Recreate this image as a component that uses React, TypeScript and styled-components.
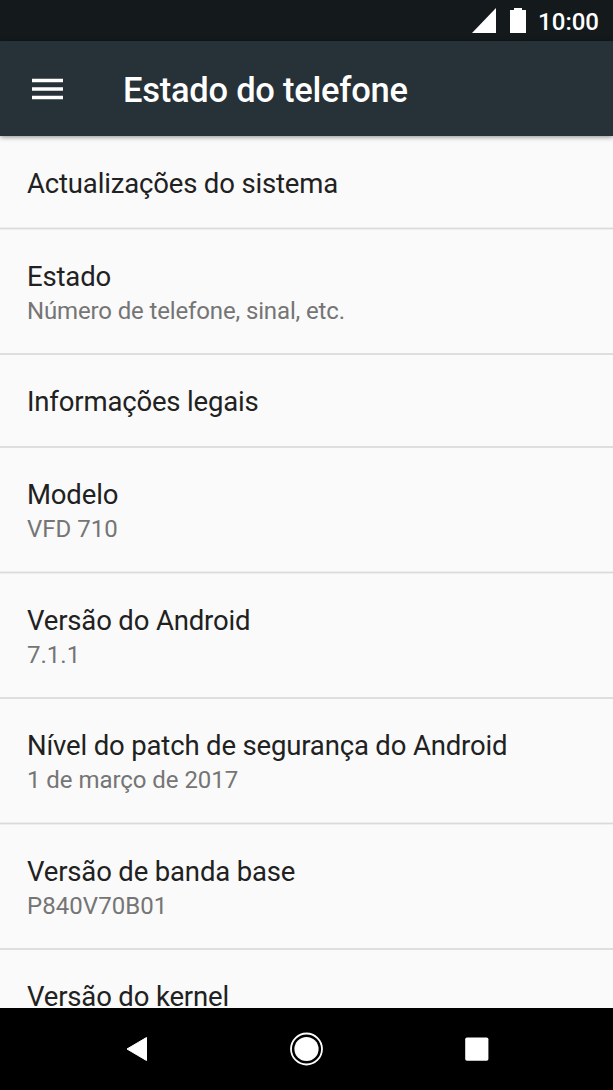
import React from "react";
import styled, { createGlobalStyle } from "styled-components";

const GlobalStyle = createGlobalStyle`
  * { box-sizing: border-box; }
  body { margin: 0; background: #fafafa; font-family: Roboto, sans-serif; }
`;

const Screen = styled.div`
  width: 613px;
  height: 1090px;
  display: flex;
  flex-direction: column;
  overflow: hidden;
  background: #fafafa;
`;

const StatusBar = styled.div`
  height: 41px;
  flex: none;
  display: flex;
  align-items: center;
  justify-content: flex-end;
  background: #14191c;
  color: #fff;
  padding-right: 14px;
`;

const Clock = styled.span`
  font-size: 24px;
  font-weight: 500;
  line-height: 28px;
  margin-left: 12px;
  padding-top: 2px;
`;

const AppBar = styled.header`
  height: 95px;
  flex: none;
  display: flex;
  align-items: center;
  padding: 0 0 0 32px;
  background: #263238;
  box-shadow: 0 1px 5px rgba(0, 0, 0, 0.45);
  z-index: 1;
`;

const Title = styled.h1`
  margin: 0 0 0 60px;
  padding-top: 2px;
  color: #fff;
  font-size: 34.5px;
  letter-spacing: -0.25px;
  font-weight: 500;
  line-height: 40px;
  white-space: nowrap;
`;

const List = styled.main`
  flex: 1;
  min-height: 0;
  overflow: hidden;
`;

const Item = styled.section<{ $height: number; $top: number; $soft?: boolean }>`
  height: ${(p) => p.$height}px;
  padding: ${(p) => p.$top}px 27px 0;
  border-bottom: ${(p) => (p.$soft ? "1px solid #dadada" : "2px solid #dedede")};
  box-shadow: ${(p) => (p.$soft ? "0 1px 0 #eeeeee, inset 0 -1px 0 #eeeeee" : "none")};
`;

const Label = styled.div`
  font-size: 27.5px;
  letter-spacing: -0.16px;
  line-height: 36px;
  color: #212121;
  white-space: nowrap;
`;

const Detail = styled.div<{ $tracking?: number }>`
  font-size: 24px;
  letter-spacing: ${(p) => p.$tracking ?? 0}px;
  line-height: 32px;
  color: #757575;
  white-space: nowrap;
`;

const NavBar = styled.nav`
  height: 82px;
  flex: none;
  display: grid;
  grid-template-columns: repeat(3, 170px);
  justify-content: center;
  align-items: center;
  justify-items: center;
  background: #000;
`;

const items = [
  { label: "Actualizações do sistema", height: 93, top: 30, soft: true },
  { label: "Estado", detail: "Número de telefone, sinal, etc.", tracking: -0.14, height: 126, top: 30 },
  { label: "Informações legais", height: 93, top: 29 },
  { label: "Modelo", detail: "VFD 710", height: 125, top: 29, soft: true },
  { label: "Versão do Android", detail: "7.1.1", height: 126, top: 30 },
  { label: "Nível do patch de segurança do Android", detail: "1 de março de 2017", tracking: -0.05, height: 125, top: 29, soft: true },
  { label: "Versão de banda base", detail: "P840V70B01", tracking: 0.05, height: 126, top: 30 },
  { label: "Versão do kernel", height: 126, top: 29 },
];

export default function App() {
  return (
    <Screen>
      <GlobalStyle />
      <StatusBar>
        <svg width="54" height="41" viewBox="0 0 54 41" fill="#fff">
          <path d="M24 8v25H0z" />
          <path d="M38 10h4V8h8v2h4v23H38z" />
        </svg>
        <Clock>10:00</Clock>
      </StatusBar>
      <AppBar>
        <svg width="31" height="22" viewBox="0 0 31 22" fill="#fff">
          <path d="M0 .7h31v3.6H0zM0 9.2h31v3.6H0zM0 17.7h31v3.6H0z" />
        </svg>
        <Title>Estado do telefone</Title>
      </AppBar>
      <List>
        {items.map((item) => (
          <Item key={item.label} $height={item.height} $top={item.top} $soft={item.soft}>
            <Label>{item.label}</Label>
            {item.detail && <Detail $tracking={item.tracking}>{item.detail}</Detail>}
          </Item>
        ))}
      </List>
      <NavBar>
        <svg width="22" height="26" viewBox="0 0 22 26" fill="#fff">
          <path d="M20.5 1.5v23L1 13z" stroke="#fff" strokeWidth="1" strokeLinejoin="round" />
        </svg>
        <svg width="34" height="34" viewBox="0 0 34 34" fill="none">
          <circle cx="16.5" cy="17" r="15.5" stroke="#fff" strokeWidth="1.8" />
          <circle cx="16.5" cy="17" r="12.1" fill="#fff" />
        </svg>
        <svg width="24" height="24" viewBox="0 0 24 24">
          <rect x=".2" y=".5" width="23.2" height="23.2" rx="1.8" fill="#fff" />
        </svg>
      </NavBar>
    </Screen>
  );
}
